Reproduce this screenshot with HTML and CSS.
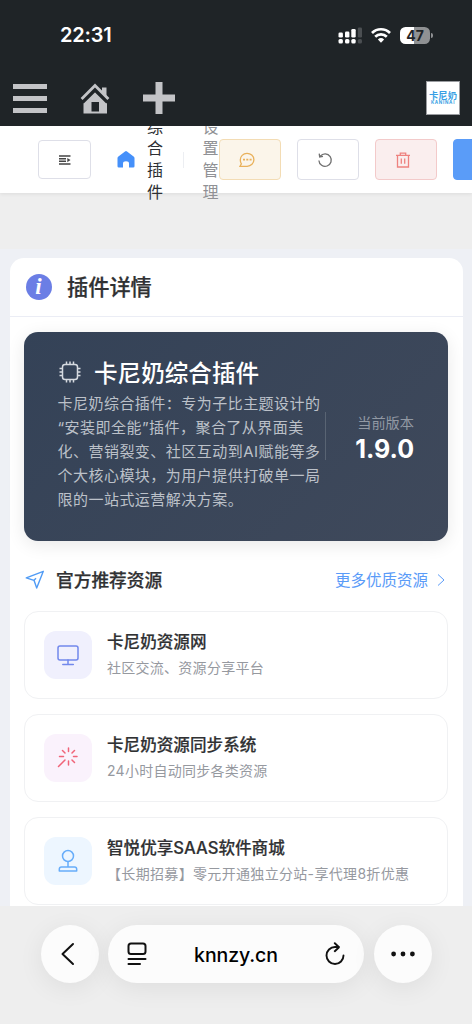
FILE: index.html
```html
<!DOCTYPE html>
<html lang="zh-CN">
<head>
<meta charset="utf-8">
<meta name="viewport" content="width=device-width">
<title>卡尼奶综合插件</title>
<link rel="stylesheet" href="styles.css">
</head>
<body>
<div class="screen">
  <header class="top">
    <div class="status">
      <span class="time">22:31</span>
      <div class="indicators">
        <svg class="signal" width="25" height="18" viewBox="0 0 25 18" fill="#fff"><rect x="0.5" y="5.5" width="4.4" height="5" rx="1.3"/><rect x="7" y="4.5" width="4.4" height="6" rx="1.3"/><rect x="13.3" y="2" width="4.4" height="8.5" rx="1.3"/><rect x="19.8" y="0.5" width="4.2" height="10" rx="1.3" fill="#4b4f52"/><rect x="0.5" y="12" width="4.4" height="4.6" rx="1.5"/><rect x="7" y="12" width="4.4" height="4.6" rx="1.5"/><rect x="13.3" y="12" width="4.4" height="4.6" rx="1.5"/><rect x="19.8" y="12" width="4.2" height="4.6" rx="1.5" fill="#4b4f52"/></svg>
        <svg class="wifi" width="20" height="16" viewBox="0 0 20 16" fill="none" stroke="#fff" stroke-width="2.7"><path d="M1 6A12.7 12.7 0 0 1 19 6"/><path d="M4.2 9.8A8.2 8.2 0 0 1 15.8 9.8"/><path d="M6.9 12.5A4.6 4.6 0 0 1 13.1 12.5L10 15.8Z" fill="#fff" stroke="none"/></svg>
        <div class="battery"><span>47</span></div><i class="cap"></i>
      </div>
    </div>
    <nav class="admin">
      <svg class="burger" width="34" height="30" viewBox="0 0 34 30" fill="#c3c4c7"><path d="M0 0h34v5H0zM0 12h34v5H0zM0 24h34v5H0z"/></svg>
      <svg class="house" width="30" height="31" viewBox="0 0 30 31"><g fill="#c3c4c7"><path d="M15 6.5L27 18.2V30.5H3.5V17.8z"/></g><path d="M1.8 18.500L15 5.500L28.2 18.500" fill="none" stroke="#1f2427" stroke-width="5.5"/><path d="M22 4.500h4.500v10l-4.500-4z" fill="#c3c4c7"/><path d="M1.6 16L15 2.6L28.4 16" fill="none" stroke="#c3c4c7" stroke-width="2.8"/><path d="M11.5 19h7.5v9.5h-7.5z" fill="#1f2427"/></svg>
      <svg class="plus" width="32" height="32" viewBox="0 0 32 32" fill="#c3c4c7"><path d="M12.5 0h7v12.5H32v7H19.500V32h-7V19.500H0v-7h12.500z"/></svg>
      <div class="avatar"><b>卡尼奶</b><small>KANINAI</small></div>
    </nav>
  </header>

  <section class="toolbar">
    <button class="btn menu"><svg width="12" height="10" viewBox="0 0 12 10" fill="none" stroke="#444" stroke-width="1.400"><path d="M0 1h11.500M0 3.700h7M0 6.300h7M0 9h11.500"/><path d="M8.300 2.900L11.500 5 8.300 7.200z" fill="#444" stroke="none"/></svg></button>
    <svg class="crumb-home" width="18" height="17" viewBox="0 0 18 17" fill="#4590fa"><path d="M8 .5Q9 -.3 10 .5L16.600 5.400Q17.500 6 17.500 7V15.200Q17.500 16.500 16.200 16.500H12V12.600Q12 10.300 9 10.300T6 12.600V16.500H1.800Q.5 16.500 .5 15.200V7Q.5 6 1.400 5.400z"/></svg>
    <span class="crumb">综合插件</span>
    <i class="sep"></i>
    <span class="crumb muted">设置管理</span>
    <button class="btn wide warn"><svg width="16" height="16" viewBox="0 0 16 16" fill="none" stroke="#e9b15b" stroke-width="1.300"><path d="M2 14.300H8.200A6.800 6.500 0 1 0 1.300 8Q1.300 10.300 2.400 11.800L1 14.300z"/><path d="M4 7.700h2M7.300 7.700h2M10.600 7.700h2" stroke-width="1.800"/></svg></button>
    <button class="btn wide"><svg width="16" height="16" viewBox="0 0 16 16" fill="none" stroke="#707070" stroke-width="1.300"><path d="M3.300 4.200A6.200 6.200 0 1 1 1.900 8.500M2.200 1.700L2.700 4.900 6 4.300"/></svg></button>
    <button class="btn wide danger"><svg width="16" height="16" viewBox="0 0 16 16" fill="none" stroke="#ee827f" stroke-width="1.300"><path d="M1 3.300h14M5.300 3V1.200h5.400V3M2.500 3.500V15h11V3.500M6.300 6.400v5.400M9.700 6.400v5.400"/></svg></button>
    <button class="btn wide primary"></button>
  </section>
  <div class="strip"></div>

  <main class="page">
    <article class="panel">
      <div class="panel-head">
        <span class="info">i</span>
        <h1>插件详情</h1>
      </div>
      <div class="panel-body">
        <section class="hero">
          <div class="hero-main">
            <h2><svg width="24" height="24" viewBox="0 0 24 24" fill="none" stroke="#d6dae0" stroke-width="1.500"><rect x="4.500" y="4.500" width="15" height="15" rx="2.500"/><path d="M8.500 1.500V5M12 1.500V5M15.500 1.500V5M8.500 19v3.500M12 19v3.500M15.500 19v3.500M1.500 8.500H5M1.500 12H5M1.500 15.500H5M19 8.500h3.500M19 12h3.500M19 15.500h3.500"/></svg>卡尼奶综合插件</h2>
            <p>卡尼奶综合插件：专为子比主题设计的<br>“安装即全能”插件，聚合了从界面美<br>化、营销裂变、社区互动到AI赋能等多<br>个大核心模块，为用户提供打破单一局<br>限的一站式运营解决方案。</p>
          </div>
          <div class="version"><span>当前版本</span><strong>1.9.0</strong></div>
        </section>

        <div class="section-head">
          <svg width="20" height="20" viewBox="0 0 20 20" fill="none" stroke="#509bf5" stroke-width="1.400" stroke-linejoin="round"><path d="M18.300 1.300L1.300 7.900 9 10.300 11.700 18zM9 10.300L11 8.300"/></svg>
          <h3>官方推荐资源</h3>
          <a class="more">更多优质资源<svg width="8" height="12" viewBox="0 0 8 12" fill="none" stroke="#5a9bf8" stroke-width="1"><path d="M1 .5L7 6 1 11.500"/></svg></a>
        </div>

        <div class="cards">
          <div class="card">
            <span class="tile violet"><svg width="24" height="24" viewBox="0 0 24 24" fill="none" stroke="#7288ec" stroke-width="1.500" stroke-linecap="round"><rect x="2" y="3" width="20" height="14" rx="2"/><path d="M12 17v4.500M6.800 21.500h10.500"/></svg></span>
            <div><h4>卡尼奶资源网</h4><p>社区交流、资源分享平台</p></div>
          </div>
          <div class="card">
            <span class="tile pink"><svg width="24" height="24" viewBox="0 0 24 24" fill="none" stroke="#f06478" stroke-width="1.500" stroke-linecap="round"><path d="M2.500 20.500L9 14M12.500 2v3.500M12.500 15v4M3.500 10.500H7.500M17.500 10.500H21M6.500 4.500L9 7M18.500 4.500L16 7M16 14l2.500 2.500"/></svg></span>
            <div><h4>卡尼奶资源同步系统</h4><p>24小时自动同步各类资源</p></div>
          </div>
          <div class="card">
            <span class="tile blue"><svg width="24" height="24" viewBox="0 0 24 24" fill="none" stroke="#67adfa" stroke-width="1.500" stroke-linejoin="round"><circle cx="12" cy="7" r="5.500"/><path d="M12 12.500V18M3.300 22V20.200Q3.300 18 5.500 18H18.500Q20.700 18 20.700 20.200V22z"/></svg></span>
            <div><h4>智悦优享SAAS软件商城</h4><p class="offer">【长期招募】零元开通独立分站-享代理8折优惠</p></div>
          </div>
        </div>
      </div>
    </article>
  </main>

  <footer class="browser">
    <button class="round"><svg width="14" height="24" viewBox="0 0 14 24" fill="none" stroke="#111" stroke-width="2" stroke-linecap="round" stroke-linejoin="round"><path d="M12 2L1.500 12 12 22"/></svg></button>
    <div class="address">
      <svg width="20" height="24" viewBox="0 0 20 24" fill="none" stroke="#111" stroke-width="2" stroke-linecap="round"><rect x="1.500" y="1.500" width="17" height="10.500" rx="2.500"/><path d="M1.500 17h17M1.500 22h11.500"/></svg>
      <span>knnzy.cn</span>
      <svg width="20" height="24" viewBox="0 0 20 24" fill="none" stroke="#111" stroke-width="1.900" stroke-linecap="round" stroke-linejoin="round"><path d="M18.500 13.500A8.500 8.500 0 1 1 10 5H14M9.800 1.200L14 5.200 9.800 9.200"/></svg>
    </div>
    <button class="round"><svg width="24" height="6" viewBox="0 0 24 6" fill="#111"><circle cx="2.600" cy="3" r="2.400"/><circle cx="12" cy="3" r="2.400"/><circle cx="21.400" cy="3" r="2.400"/></svg></button>
  </footer>
</div>
</body>
</html>
```
FILE: styles.css
```css
* { box-sizing: border-box; margin: 0; padding: 0; }
body { font-family: Inter, "Noto Sans CJK SC", sans-serif; background: #eee; }
button { border: 0; background: none; font: inherit; flex: none; }
svg { display: block; flex: none; }
.screen { width: 472px; height: 1024px; overflow: hidden; display: flex; flex-direction: column; }

.top { height: 126px; flex: none; background: #1f2427; position: relative; z-index: 2; }
.status { height: 70px; padding: 0 39px 0 60px; display: flex; justify-content: space-between; align-items: center; }
.time { color: #fff; font-size: 20px; font-weight: 600; letter-spacing: -.2px; line-height: 24px; }
.indicators { display: flex; align-items: center; }
.signal { margin-top: 1px; }
.wifi { margin-left: 8px; margin-top: -1px; }
.battery { margin-left: 9px; width: 30px; height: 17px; border-radius: 5.5px; background: linear-gradient(90deg, #fff 48%, #8f9193 48%); color: #1f2427; font-size: 14px; font-weight: 700; line-height: 17px; text-align: center; }
.cap { width: 2px; height: 5px; margin-left: 1px; border-radius: 0 2px 2px 0; background: #8f9193; }
.admin { height: 56px; padding: 0 12px 0 13px; display: flex; align-items: center; }
.burger { margin-top: 2px; }
.house { margin-left: 33px; margin-top: 1px; }
.plus { margin-left: 33px; margin-top: -1px; width: 32px; }
.avatar { margin-left: auto; width: 34px; height: 34px; background: #fff; border: 1px solid #9a9ca0; display: flex; flex-direction: column; align-items: center; justify-content: center; color: #389fe4; }
.avatar b { font-size: 9.3px; line-height: 9px; font-weight: 700; white-space: nowrap; }
.avatar small { font-size: 4.5px; line-height: 5px; font-weight: 700; letter-spacing: .7px; }

.toolbar { height: 67px; flex: none; background: #fff; padding-left: 38px; display: flex; align-items: center; position: relative; z-index: 1; box-shadow: 0 1px 4px rgba(0,0,0,.08); }
.btn { height: 41px; border: 1px solid #dedfe8; border-radius: 4px; display: flex; align-items: center; justify-content: center; }
.btn.menu { width: 53px; height: 39px; }
.btn.wide { width: 62px; margin-right: 16px; }
.btn.wide svg { margin-right: 6px; }
.btn.warn { background: #fbf5ea; border-color: #f3dcb4; }
.btn.danger { background: #faeeee; border-color: #f3caca; }
.btn.primary { background: #5a9cf8; border-color: #5a9cf8; }
.crumb-home { margin-left: 26px; }
.crumb { width: 16px; flex: none; margin-left: 12px; font-size: 16px; line-height: 21.6px; word-break: break-all; color: #2d2f33; }
.sep { width: 1px; height: 16px; flex: none; margin-left: 20px; background: #eceef2; }
.crumb { padding-top: 1px; }
.crumb.muted { margin-left: 18.5px; margin-right: .5px; color: #909195; }
.strip { height: 56px; flex: none; background: #eee; }

.page { height: 657px; flex: none; overflow: hidden; background: #eef0f5; padding: 9px 9.5px 0; }
.panel { height: 760px; background: #fff; border-radius: 14px; }
.panel-head { height: 59px; border-bottom: 1px solid #ebedf5; padding-left: 16px; display: flex; align-items: center; }
.info { width: 26px; height: 26px; border-radius: 50%; background: #6b7ee5; color: #fff; font: italic bold 23px/25px "Liberation Serif", serif; text-align: center; }
.panel-head h1 { margin-left: 15.5px; font-size: 21.2px; line-height: 30px; font-weight: 500; -webkit-text-stroke: .25px; color: #303133; }
.panel-body { padding: 15px 14.5px 0; }
.hero { height: 209px; border-radius: 14px; background: linear-gradient(135deg, #344257, #3f495b); box-shadow: 0 4px 18px rgba(0,0,0,.09); padding: 23px 34px 0 33.5px; display: flex; justify-content: space-between; }
.hero-main { width: 268px; }
.hero h2 { display: flex; align-items: center; gap: 12.5px; height: 34px; color: #fff; font-size: 23.6px; font-weight: 500; white-space: nowrap; }
.hero p { margin-top: 3px; font-size: 15px; letter-spacing: .47px; line-height: 24px; white-space: nowrap; color: #bcc1c9; }
.version { align-self: flex-start; margin-top: 57px; height: 48px; border-left: 1px solid #596473; width: 89px; display: flex; flex-direction: column; align-items: flex-end; color: #fff; }
.version span { font-size: 14.2px; line-height: 22px; color: #9299a4; }
.version strong { font-size: 25px; line-height: 30px; font-weight: 700; }
.section-head { height: 70px; padding: 9px 3px 0 1px; display: flex; align-items: center; }
.section-head svg { margin-top: -1px; }
.section-head h3 { margin-left: 11px; font-size: 17.7px; font-weight: 500; -webkit-text-stroke: .25px; line-height: 26px; color: #303133; }
.more { margin-left: auto; display: flex; align-items: center; gap: 9px; font-size: 15.5px; line-height: 24px; color: #5a9bf8; }
.cards { display: flex; flex-direction: column; gap: 15.2px; }
.card { height: 88px; border: 1px solid #f0f1f3; border-radius: 14px; padding: 0 19px; display: flex; align-items: center; gap: 15px; }
.card div { padding-bottom: 2px; }
.tile { width: 48px; height: 48px; flex: none; border-radius: 12px; display: flex; align-items: center; justify-content: center; }
.violet { background: #f0f0fd; }
.pink { background: #faf2fc; }
.blue { background: #edf6ff; }
.card h4 { font-size: 16.6px; line-height: 26px; font-weight: 500; -webkit-text-stroke: .2px; color: #303133; white-space: nowrap; }
.card p { font-size: 14px; letter-spacing: .27px; line-height: 25px; color: #96999f; white-space: nowrap; }
.card .offer { letter-spacing: .33px; }

.browser { height: 118px; flex: none; background: #eee; padding: 19px 40.5px 0; display: flex; align-items: flex-start; gap: 9.5px; }
.round, .address { height: 58px; background: #fcfcfc; box-shadow: 0 5px 26px rgba(0,0,0,.07); display: flex; align-items: center; justify-content: center; }
.round { width: 58px; border-radius: 50%; }
.round:first-child svg { margin-right: 3px; }
.address { flex: 1; border-radius: 29px; justify-content: space-between; padding: 0 19px; }
.address span { font-size: 19.5px; line-height: 26px; font-weight: 500; letter-spacing: -.1px; padding-top: 1px; color: #000; }
```
